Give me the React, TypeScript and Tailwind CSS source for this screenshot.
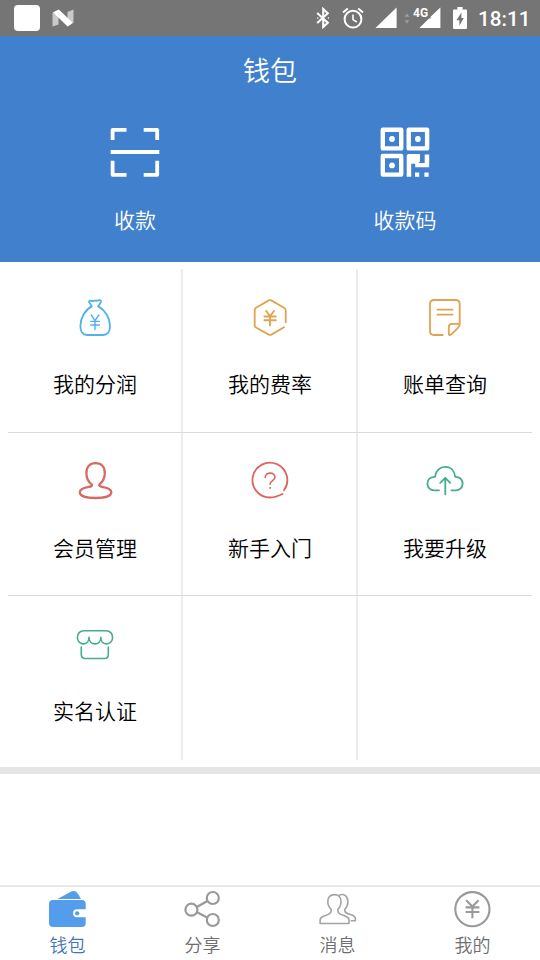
import React from 'react';

const ScanIcon = () => (
  <svg className="h-[54px] w-[54px]" viewBox="0 0 54 54" fill="none" stroke="#fff" strokeWidth="3.8" strokeLinejoin="round">
    <path d="M4.6 15V4.9H18.5M35.7 4.9H49.2V15M49.2 35.7V49.8H35.7M18.5 49.8H4.6V35.7" />
    <path d="M2.7 27H51.3" strokeWidth="4.2" />
  </svg>
);

const QrIcon = () => (
  <svg className="h-[54px] w-[54px]" viewBox="0 0 54 54" fill="none">
    <g stroke="#fff" strokeWidth="4.4" strokeLinejoin="round">
      <rect x="4.8" y="4.8" width="18.4" height="18.6" />
      <rect x="30.7" y="4.8" width="18.4" height="18.6" />
      <rect x="4.8" y="31" width="18.4" height="18.6" />
    </g>
    <g fill="#fff">
      <circle cx="14" cy="14" r="2.9" />
      <circle cx="39.9" cy="14" r="2.9" />
      <circle cx="14" cy="40.4" r="2.9" />
      <path d="M30 29H42V36.6L40.6 38H46.7V29.6H51.2V42.3H37.2V38.8H33.2V51.8H28.7V30.3Z" />
      <rect x="37" y="47.5" width="4.2" height="4.3" />
      <rect x="46.4" y="47.5" width="4.2" height="4.3" />
    </g>
  </svg>
);

const Line = ({ color, width = 1.8, children }: { color: string; width?: number; children: React.ReactNode }) => (
  <svg className="h-10 w-10" viewBox="0 0 40 40" fill="none" stroke={color} strokeWidth={width} strokeLinecap="round" strokeLinejoin="round">
    {children}
  </svg>
);

const BagIcon = () => (
  <Line color="#52b2ea">
    <path d="M16.7 8.4 14.2 4.2C13.6 2.6 15 2.4 16.2 2.8 18 3.6 18.8 2.2 20.4 2.6 21.6 3 22 2.8 23.2 2.3 24.8 1.8 26.6 2.4 25.8 4.2L23.3 8.4" />
    <path d="M16.7 8.4C10 12 5.4 20 5.4 28 5.4 34.5 8 37 12 37H28C32.4 37 35 34.5 35 28 35 20 30 12 23.3 8.4" />
    <path d="M16.2 17 20 22.6 23.8 17M15.8 23.4H24.4M15.8 27H24.4M20 22.6V31.5" strokeWidth="1.4" />
  </Line>
);

const RateIcon = () => (
  <Line color="#dfa351">
    <path d="M35.7 24.3V12.2Q35.7 10.7 34.4 10L21.3 2.4Q20 1.7 18.7 2.4L6 9.8Q4.7 10.6 4.7 12V27.4Q4.7 28.8 6 29.5L18.7 36.6Q20 37.3 21.3 36.6L34 29.2" />
    <path d="M16.2 13 20 18.3 24 13M14.4 18.5H25.8M14.4 22.3H25.8M20 18.3V27.3" strokeWidth="1.9" />
  </Line>
);

const BillIcon = () => (
  <Line color="#dfa351">
    <path d="M17.7 37H9Q5 37 5 33V6Q5 2 9 2H30.7Q34.7 2 34.7 6V26Q34.7 28 33.2 29.6L26.3 36.3Q23.8 38 23.8 35.8V29Q23.8 25.8 27 25.8H34.5" />
    <path d="M12.4 11.7H27.6M12.4 16.7H27.6" />
  </Line>
);

const MemberIcon = () => (
  <Line color="#d96960" width={2.3}>
    <path d="M16.8 23.4C13 20.8 11.4 16.4 11.4 12 11.4 5.6 15 2.2 20.6 2.2S29.8 5.6 29.8 12C29.8 16.4 28 20.8 24.4 23.4 23.6 24.7 25 25.5 27 25.8 32.6 26.6 36.3 28.4 36.3 31.3 36.3 35 29.5 37 20.5 37S4.8 35 4.8 31.3C4.8 28.4 8.4 26.6 14 25.8 16.2 25.5 17.6 24.7 16.8 23.4Z" />
  </Line>
);

const GuideIcon = () => (
  <Line color="#dc655e">
    <path d="M34 29.3A17.4 17.4 0 1 0 20 36.5C24.6 36.6 27.6 35.4 32.5 33" />
    <path d="M15.2 16.4C15.2 10.8 25 10.6 25 16.2 25 19.6 20 19.6 20 23.3" strokeWidth="1.6" />
    <circle cx="20" cy="26.9" r="0.6" strokeWidth="1" />
  </Line>
);

const UpgradeIcon = () => (
  <Line color="#45ad8c">
    <path d="M14 29.3H9.2C5.2 29.3 2.4 26.4 2.4 22.7 2.4 18.7 5.4 15.8 10 15.8 10.6 9.8 14.8 5.8 20.3 5.8S29.6 9.8 30.3 15.8C34.8 16 37.6 18.7 37.6 22.7 37.6 26.4 34.8 29.3 30.8 29.3H26.4" />
    <path d="M20.3 33.3V17M15.2 21.8 20.3 16.8 25.2 21.8" />
  </Line>
);

const ShopIcon = () => (
  <Line color="#45ad8c" width={1.6}>
    <path d="M14 12.4C14 16.4 11.6 18.9 8.4 18.9S2.4 16.2 2.4 12.4C2.4 8.6 5 5.7 8.8 5.7H31.2C35 5.7 37.6 8.6 37.6 12.4 37.6 16.2 35 18.9 31.6 18.9S25.8 16.4 25.8 12.4C25.8 16.4 23.4 18.9 20 18.9S14 16.4 14 12.4Z" />
    <path d="M6.3 22V29.6Q6.3 33.5 10.2 33.5H29.4Q33.3 33.5 33.3 29.6V22" />
  </Line>
);

const WalletTab = () => (
  <svg className="h-10 w-[41px]" viewBox="0 0 41 40" fill="#539deb">
    <path d="M10.5 10 24.2 2.6Q27.5 1 29.4 3 31.5 5 34 10Z" />
    <path d="M6 11H34.8Q38.7 11 38.7 15V20.3H30A4 4 0 0 0 30 28.3H38.7V34Q38.7 38 34.8 38H6Q2 38 2 34V15Q2 11 6 11Z" />
    <circle cx="30.2" cy="24.3" r="2.1" />
  </svg>
);

const ShareTab = () => (
  <svg className="h-10 w-[41px]" viewBox="0 0 41 40" fill="none" stroke="#999" strokeWidth="2.2">
    <circle cx="9.4" cy="20.7" r="6" />
    <circle cx="30.8" cy="9" r="6" />
    <circle cx="30.8" cy="31" r="6" />
    <path d="M14.8 18 25.4 12M15 23.2 25.2 28.4" />
  </svg>
);

const MessageTab = () => (
  <svg className="h-10 w-[41px]" viewBox="0 0 41 40" fill="none" stroke="#a3a3a3" strokeWidth="1.6" strokeLinejoin="round">
    <path d="M14.2 20.4C12 18.4 10.8 15.4 10.8 12.2 10.8 8.2 13.4 5.6 17.4 5.6S24 8.2 24 12.2C24 15.4 22.9 18.4 20.9 20.4 20 24.6 24 25.4 28.3 27 31 28 32 29 32 31V34.5H3.1V31C3.1 29 4.3 28 6.9 27 11 25.4 15 24.6 14.2 20.4Z" />
    <path d="M22 6.2C27 4.2 30.9 7.4 30.9 12.4 30.9 15.4 29.8 18.3 27.8 20.4 27.2 24 30.6 24.6 34.8 26 37.4 27 38.4 28 38.4 29.6V31.8H33.6" />
  </svg>
);

const MineTab = () => (
  <svg className="h-10 w-[41px]" viewBox="0 0 41 40" fill="none" stroke="#999" strokeWidth="2.1">
    <circle cx="20.4" cy="20.2" r="17.1" />
    <path d="M14.2 11.2 20.4 17.6 26.6 11.2M13.6 18.4H27.4M13.6 23H27.4M20.4 17.6V29.3" />
  </svg>
);

const StatusBar = () => (
  <div className="flex h-9 shrink-0 items-center bg-[#757575] pl-3.5 text-white">
    <div className="h-[26px] w-[26px] rounded-[4px] bg-white" />
    <svg className="ml-3 h-[18px] w-[22px]" viewBox="0 0 22 18">
      <path d="M0.5 3.5 6.5 6V15.5L0.5 17.5ZM21.5 0.5V14L15.5 11.5V3Z" fill="#c9c9c9" />
      <path d="M1 3.2 6.8 0.5 21 14 15.6 17.6Z" fill="#fff" />
    </svg>
    <svg className="ml-[242px] h-[22px] w-[14px]" viewBox="0 0 14 22" fill="none" stroke="#fff" strokeWidth="2.1">
      <path d="M1.2 6 11.8 15.8 7.2 20V2L11.8 6.2 1.2 16" />
      <circle cx="1.8" cy="11" r="0.4" strokeWidth="1" />
      <circle cx="12.4" cy="11" r="0.4" strokeWidth="1" />
    </svg>
    <svg className="ml-3 h-[22px] w-[22px]" viewBox="0 0 22 22" fill="none" stroke="#fff" strokeWidth="2">
      <circle cx="11" cy="12.2" r="8.4" />
      <path d="M11 7.5V12.6L14.8 15" strokeWidth="1.6" />
      <path d="M1 5.4 5.8 1.4M16.2 1.4 21 5.4" />
    </svg>
    <svg className="ml-[11px] h-[22px] w-[22px]" viewBox="0 0 22 22" fill="#fff">
      <path d="M21.6 0.4V21H0.4Z" />
    </svg>
    <svg className="ml-[7px] h-[22px] w-[6px]" viewBox="0 0 6 22" fill="#9f9f9f">
      <path d="M3 6.6 5.4 9.8H0.6ZM3 16.4 5.4 13.2H0.6Z" />
    </svg>
    <div className="relative ml-[9px] h-[22px] w-[22px]">
      <svg className="h-[22px] w-[22px]" viewBox="0 0 22 22" fill="#fff">
        <path d="M21.4 0.6V21H0.4L10 11.4H11.5V9.8Z" />
      </svg>
      <span className="absolute -left-[6px] -top-[1px] font-['Roboto',sans-serif] text-[12px] font-bold leading-[14px]">4G</span>
    </div>
    <svg className="ml-3 h-[22px] w-[14px]" viewBox="0 0 14 22">
      <path d="M4.4 0H9.6V2.4H13Q14 2.4 14 3.4V21Q14 22 13 22H1Q0 22 0 21V3.4Q0 2.4 1 2.4H4.4Z" fill="#fff" />
      <path d="M8.4 5.5 3.4 13.2H6.4V18.8L10.8 11H8.4Z" fill="#757575" />
    </svg>
    <span className="ml-[11px] pt-px font-['Roboto',sans-serif] text-[20.7px] font-medium leading-9">18:11</span>
  </div>
);

const menu = [
  [
    { label: '我的分润', icon: BagIcon },
    { label: '我的费率', icon: RateIcon },
    { label: '账单查询', icon: BillIcon },
  ],
  [
    { label: '会员管理', icon: MemberIcon },
    { label: '新手入门', icon: GuideIcon },
    { label: '我要升级', icon: UpgradeIcon },
  ],
  [{ label: '实名认证', icon: ShopIcon }, null, null],
];

const tabs = [
  { label: '钱包', icon: WalletTab, active: true },
  { label: '分享', icon: ShareTab, active: false },
  { label: '消息', icon: MessageTab, active: false },
  { label: '我的', icon: MineTab, active: false },
];

const App: React.FC = () => {
  return (
    <div className="flex h-[960px] w-[540px] flex-col overflow-hidden bg-white font-['Noto_Sans_CJK_SC',sans-serif] font-[350]">
      <StatusBar />

      {/* Header */}
      <header className="h-[226px] shrink-0 bg-[#4180cd] text-white">
        <h1 className="pt-3.5 text-center text-[27px] font-[350] leading-10">钱包</h1>
        <div className="mt-[35px] grid grid-cols-2">
          <button className="flex flex-col items-center">
            <ScanIcon />
            <span className="mt-[25px] text-[21px] leading-[30px]">收款</span>
          </button>
          <button className="flex flex-col items-center">
            <QrIcon />
            <span className="mt-[25px] text-[21px] leading-[30px]">收款码</span>
          </button>
        </div>
      </header>

      {/* Menu grid */}
      <main className="mx-2 mt-[7px] shrink-0 divide-y divide-[#dadada]">
        {menu.map((row, i) => (
          <div key={i} className="grid h-[163.5px] grid-cols-[175px_175px_174px]">
            {row.map((item, j) => (
              <div
                key={j}
                className={`flex flex-col items-center pt-[28.5px] ${j < 2 ? 'border-r-2 border-[#ececec] pl-px' : ''}`}
              >
                {item && (
                  <>
                    <item.icon />
                    <span className="mt-[30.6px] text-[21px] leading-[30px] text-black">{item.label}</span>
                  </>
                )}
              </div>
            ))}
          </div>
        ))}
      </main>
      <div className="mt-[7.5px] h-[7px] shrink-0 bg-[#e5e5e5]" />

      {/* Bottom tabs */}
      <nav className="mt-auto grid h-[75px] shrink-0 grid-cols-4 border-t-2 border-[#e8e8e8]">
        {tabs.map((tab) => (
          <button key={tab.label} className="flex flex-col items-center pt-[2px]">
            <tab.icon />
            <span className={`mt-[2px] text-[18px] leading-[26px] ${tab.active ? 'text-[#3f74b8]' : 'text-[#6e6e6e]'}`}>
              {tab.label}
            </span>
          </button>
        ))}
      </nav>
    </div>
  );
};

export default App;
